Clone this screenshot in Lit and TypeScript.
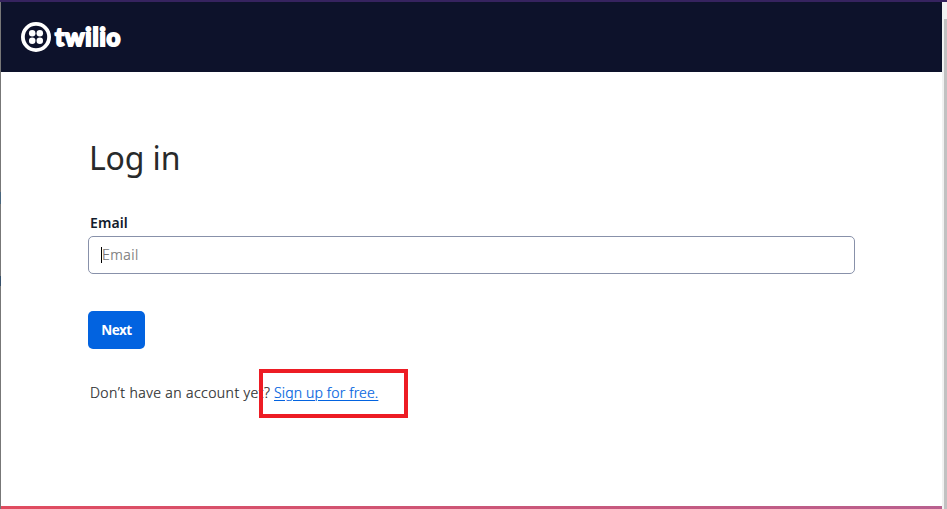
import { LitElement, html, css } from "lit";
import { customElement } from "lit/decorators.js";

@customElement("brand-logo")
class BrandLogo extends LitElement {
  static styles = css`
    :host { display: flex; align-items: center; color: #fff; }
    .mark { display: block; width: 30px; height: 30px; flex: none; }
    .word {
      margin: 0 0 0 4px; font: 900 24px/30px Lato, "Liberation Sans", sans-serif;
      letter-spacing: 0.9px; -webkit-text-stroke: 1.9px #fff; white-space: nowrap;
    }
  `;
  render() {
    return html`
      <svg class="mark" viewBox="0 0 30 30" fill="#fff" aria-hidden="true">
        <circle cx="15" cy="15" r="13.1" fill="none" stroke="#fff" stroke-width="3.8" />
        <circle cx="11.2" cy="11.2" r="3.25" /><circle cx="18.8" cy="11.2" r="3.25" />
        <circle cx="11.2" cy="18.8" r="3.25" /><circle cx="18.8" cy="18.8" r="3.25" />
      </svg>
      <span class="word">twilio</span>
    `;
  }
}

@customElement("app-root")
class AppRoot extends LitElement {
  static styles = css`
    :host {
      display: flex; flex-direction: column; box-sizing: border-box; height: 509px;
      overflow: hidden; background: #fff; color: #282a2b;
      font: 400 14px/20px "Noto Sans", "Open Sans", sans-serif;
    }
    .strip { height: 2px; flex: none; background: #36235f; }
    .window { display: flex; flex: 1; min-height: 0; }
    .edge {
      width: 1px; flex: none;
      background: linear-gradient(#777 0 190px, #48667d 190px 202px, #777 202px 274px,
        #36506a 274px 284px, #777 284px);
    }
    .page { flex: 1; min-width: 0; display: flex; flex-direction: column; }
    .header {
      height: 70px; flex: none; box-sizing: border-box; padding-left: 20px;
      background: #0d122b; display: flex; align-items: center;
    }
    .form { flex: 1; padding: 63px 87px 0; display: flex; flex-direction: column; align-items: flex-start; }
    h1 { margin: 0 0 0 1px; font-weight: 400; font-size: 32px; line-height: 46px; letter-spacing: -0.15px; white-space: nowrap; }
    .label { margin: 32px 0 3px 2px; font-weight: 600; color: #121c2d; letter-spacing: 0.1px; }
    .field {
      width: 100%; height: 38px; box-sizing: border-box; border: 1px solid #8891aa;
      border-radius: 5px; padding-left: 12px; display: flex; align-items: center;
    }
    .caret { width: 1px; height: 16px; background: #000; }
    .hint { color: #777; font-weight: 300; letter-spacing: 0.5px; -webkit-text-stroke: 0.2px; }
    .next {
      margin-top: 37px; width: 57px; height: 38px; padding: 0; border: 0; border-radius: 5px;
      background: #0263e0; color: #fff; font: 700 13.5px/20px "Noto Sans", sans-serif; letter-spacing: -0.5px;
    }
    .signup { margin: 34px 0 0 2px; display: flex; font-weight: 300; white-space: nowrap; -webkit-text-stroke: 0.2px; }
    .question { width: 184px; letter-spacing: 0.42px; }
    .target { position: relative; letter-spacing: 0.15px; }
    a { color: #0263e0; text-decoration: underline; text-underline-offset: 2px; text-decoration-thickness: 1px; }
    .callout {
      position: absolute; left: -15px; top: -14px; width: 149px; height: 49px;
      box-sizing: border-box; border: 4px solid #ed1c24; pointer-events: none;
    }
    .bottom { height: 3px; flex: none; background: linear-gradient(90deg, #e14b5f, #b9608f); }
    .scroll { width: 5px; flex: none; box-sizing: border-box; padding: 17px 0 0 2px; background: #f1f1f1; display: flex; }
    .thumb { flex: 1; background: #c1c1c1; }
  `;
  render() {
    return html`
      <div class="strip"></div>
      <div class="window">
        <div class="edge"></div>
        <div class="page">
          <header class="header"><brand-logo></brand-logo></header>
          <main class="form">
            <h1>Log in</h1>
            <div class="label">Email</div>
            <div class="field"><span class="caret"></span><span class="hint">Email</span></div>
            <button class="next">Next</button>
            <div class="signup">
              <span class="question">Don’t have an account yet?</span>
              <span class="target"><a>Sign up for free.</a><span class="callout"></span></span>
            </div>
          </main>
          <div class="bottom"></div>
        </div>
        <div class="scroll"><div class="thumb"></div></div>
      </div>
    `;
  }
}
